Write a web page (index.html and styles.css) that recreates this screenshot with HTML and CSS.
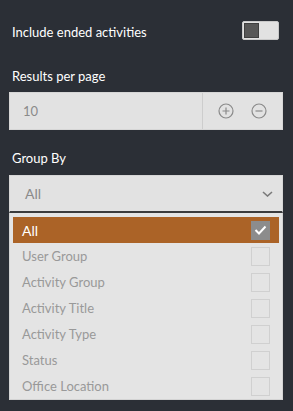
FILE: index.html
```html
<!DOCTYPE html>
<html>
<head>
  <meta charset="utf-8">
  <title>Filter panel</title>
  <link rel="stylesheet" href="styles.css">
</head>
<body>
  <div class="panel">
    <div class="toggle-row">
      <span class="label">Include ended activities</span>
      <div class="toggle"><div class="knob"></div></div>
    </div>

    <div class="label field-label">Results per page</div>
    <div class="number-input">
      <span class="value">10</span>
      <div class="steppers">
        <svg width="16" height="16" viewBox="0 0 16 16"><circle cx="8" cy="8" r="7" fill="none" stroke="#8a8a8a" stroke-width="1.2"/><path d="M8 4.5v7M4.5 8h7" stroke="#8a8a8a" stroke-width="1.2"/></svg>
        <svg width="16" height="16" viewBox="0 0 16 16"><circle cx="8" cy="8" r="7" fill="none" stroke="#8a8a8a" stroke-width="1.2"/><path d="M4.5 8h7" stroke="#8a8a8a" stroke-width="1.2"/></svg>
      </div>
    </div>

    <div class="label field-label group-label">Group By</div>
    <div class="select">
      <span class="value">All</span>
      <svg width="11" height="6" viewBox="0 0 11 6"><path d="M1 1l4.5 4 4.5-4" fill="none" stroke="#7a7a7a" stroke-width="1.6"/></svg>
    </div>
    <ul class="options">
      <li class="option selected">All<span class="check"><svg width="13" height="10" viewBox="0 0 13 10"><path d="M1.5 5l3.5 3.5 6.5-7" fill="none" stroke="#fff" stroke-width="2"/></svg></span></li>
      <li class="option">User Group<span class="check"></span></li>
      <li class="option">Activity Group<span class="check"></span></li>
      <li class="option">Activity Title<span class="check"></span></li>
      <li class="option">Activity Type<span class="check"></span></li>
      <li class="option">Status<span class="check"></span></li>
      <li class="option">Office Location<span class="check"></span></li>
    </ul>
  </div>
</body>
</html>
```

FILE: styles.css
```css
body { margin: 0; background: #2b2f36; font-family: Lato, "Open Sans", sans-serif; font-size: 13px; }
.panel { padding: 21px 10px 0 9px; }
.label { color: #fff; line-height: 18px; }
.toggle-row { display: flex; justify-content: space-between; align-items: center; padding-left: 3px; height: 19px; margin-right: 4px; }
.toggle-row .label { margin-top: 3px; }
.toggle { width: 33px; height: 15px; background: #e2e2e2; border: 1px solid #c9c9c9; border-radius: 2px; padding: 1px; box-sizing: content-box; display: flex; }
.toggle .knob { width: 15px; height: 15px; background: #575757; border: 1px solid #3f3f3f; box-sizing: border-box; }
.field-label { margin-top: 27px; padding-left: 3px; }
.group-label { margin-top: 19px; }
.number-input, .select { display: flex; align-items: center; height: 38px; background: #e2e2e2; border: 1px solid #d6d6d6; box-sizing: border-box; margin-top: 7px; }
.number-input .value { flex: 1; padding-left: 13px; color: #8a8a8a; }
.steppers { display: flex; align-items: center; gap: 17px; height: 100%; border-left: 1px solid #cdcdcd; padding: 0 15px 0 15px; }
.select { margin-top: 8px; border-bottom: 2px solid #3a3b3d; padding: 0 9px 0 15px; justify-content: space-between; }
.select .value { color: #8a8a8a; font-size: 14px; }
.options { list-style: none; margin: 0; padding: 4px 3px 0 3px; background: #e4e4e4; border: 1px solid #d3d3d3; border-top: none; height: 187px; box-sizing: border-box; }
.option { display: flex; justify-content: space-between; align-items: center; height: 26px; padding: 0 9px; color: #999; font-size: 13px; }
.option.selected { background: #ab6327; color: #fff; font-size: 14px; }
.check { width: 19px; height: 19px; border: 1px solid #d0d0d0; box-sizing: border-box; display: flex; align-items: center; justify-content: center; }
.selected .check { background: #8c8c8c; border-color: #8c8c8c; }
```
